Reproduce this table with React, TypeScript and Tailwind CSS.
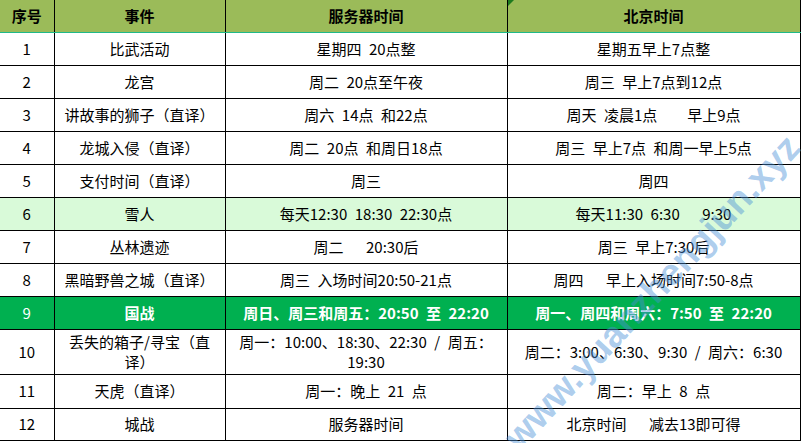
import React from "react";

type Row = {
  n: string;
  ev: React.ReactNode;
  s: React.ReactNode;
  b: React.ReactNode;
  h: string;
  kind?: "light" | "green";
};

const sp = (t: string) => t.replace(/ /g, "\u2002");

const rows: Row[] = [
  { n: "1", ev: "比武活动", s: sp("星期四 20点整"), b: "星期五早上7点整", h: "h-[33px]" },
  { n: "2", ev: "龙宫", s: sp("周二 20点至午夜"), b: sp("周三 早上7点到12点"), h: "h-[33px]" },
  { n: "3", ev: "讲故事的狮子（直译）", s: sp("周六 14点 和22点"), b: sp("周天 凌晨1点    早上9点"), h: "h-[33px]" },
  { n: "4", ev: "龙城入侵（直译）", s: sp("周二 20点 和周日18点"), b: sp("周三 早上7点 和周一早上5点"), h: "h-[33px]" },
  { n: "5", ev: "支付时间（直译）", s: "周三", b: "周四", h: "h-[33px]" },
  { n: "6", ev: "雪人", s: sp("每天12:30 18:30 22:30点"), b: sp("每天11:30 6:30   9:30"), h: "h-[33px]", kind: "light" },
  { n: "7", ev: "丛林遗迹", s: sp("周二   20:30后"), b: sp("周三 早上7:30后"), h: "h-[33px]" },
  { n: "8", ev: "黑暗野兽之城（直译）", s: sp("周三 入场时间20:50-21点"), b: sp("周四   早上入场时间7:50-8点"), h: "h-[33px]" },
  { n: "9", ev: "国战", s: sp("周日、周三和周五：20:50 至 22:20"), b: sp("周一、周四和周六：7:50 至 22:20"), h: "h-[33px]", kind: "green" },
  {
    n: "10",
    ev: (
      <>
        丢失的箱子/寻宝（直
        <br />
        译）
      </>
    ),
    s: (
      <>
        {sp("周一：10:00、18:30、22:30 / 周五：")}
        <br />
        19:30
      </>
    ),
    b: sp("周二：3:00、6:30、9:30 / 周六：6:30"),
    h: "h-[45px] leading-[20px]",
  },
  { n: "11", ev: "天虎（直译）", s: sp("周一：晚上 21 点"), b: sp("周二：早上 8 点"), h: "h-[34px]" },
  { n: "12", ev: "城战", s: "服务器时间", b: sp("北京时间   减去13即可得"), h: "h-[32px]" },
];

export default function App() {
  return (
    <div
      className="relative w-[801px] h-[443px] overflow-hidden bg-white text-black"
      style={{ fontFamily: '"Noto Sans CJK SC", "Noto Sans", sans-serif' }}
    >
      <table className="border-collapse table-fixed w-[800px] text-[15px] leading-[18px]">
        <colgroup>
          <col className="w-[54px]" />
          <col className="w-[171px]" />
          <col className="w-[282px]" />
          <col className="w-[293px]" />
        </colgroup>
        <thead>
          <tr className="h-[32px] bg-[#9bbb59] font-bold text-[15px]">
            <th className="border-r border-black border-b border-b-[#1fb98a] text-center">序号</th>
            <th className="border-r border-black border-b border-b-[#1fb98a] text-center">事件</th>
            <th className="border-r border-black border-b border-b-[#1fb98a] text-center">服务器时间</th>
            <th className="relative border-r border-black border-b border-b-[#1fb98a] text-center">
              <span className="absolute left-0 top-0 w-0 h-0 border-t-[6px] border-t-[#1e7a1e] border-r-[6px] border-r-transparent" />
              北京时间
            </th>
          </tr>
        </thead>
        <tbody>
          {rows.map((r) => {
            const bg =
              r.kind === "light"
                ? "bg-[#d9fad9]"
                : r.kind === "green"
                ? "bg-[#00b050] text-white font-bold"
                : "bg-white";
            return (
              <tr key={r.n} className={`${r.h} ${bg}`}>
                <td className={`border border-l-0 border-black text-center ${r.kind === "green" ? "font-normal" : ""}`}>{r.n}</td>
                <td className="border border-black text-center px-[2px]">{r.ev}</td>
                <td className="border border-black text-center whitespace-pre px-[2px]">{r.s}</td>
                <td className="border border-black text-center whitespace-pre px-[2px]">{r.b}</td>
              </tr>
            );
          })}
        </tbody>
      </table>

      <div
        className="pointer-events-none absolute left-[652px] top-[292px] whitespace-nowrap font-bold text-[37px] leading-none text-[#4a8fd6]/45"
        style={{ transform: "translate(-50%, -50%) rotate(-47deg)", fontFamily: '"Liberation Sans", Arial, sans-serif' }}
      >
        www.yuanzhengjun.xyz
      </div>
    </div>
  );
}
